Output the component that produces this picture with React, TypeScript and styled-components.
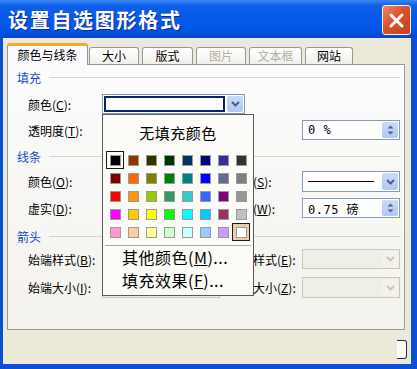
import React from "react";
import styled, { createGlobalStyle } from "styled-components";

const GlobalStyle = createGlobalStyle`
	html, body {
		margin: 0;
		padding: 0;
		background: #ece9d8;
	}
	body {
		font-family: "Noto Sans CJK SC", "Liberation Sans", sans-serif;
	}
`;

const Window = styled.div`
	width: 417px;
	height: 369px;
	display: flex;
	flex-direction: column;
	background: #0b4fd6;
	overflow: hidden;
`;

const TitleBar = styled.div`
	height: 38px;
	flex: none;
	display: flex;
	align-items: center;
	justify-content: space-between;
	padding: 0 6px 0 8px;
	background: linear-gradient(#3a86f5 0%, #0d5fe8 15%, #0055e5 80%, #0846c6 100%);
`;

const Title = styled.span`
	color: #fff;
	font-size: 20px;
	font-weight: 700;
	letter-spacing: 1.7px;
	text-shadow: 1px 1px 0 #0a2a9c;
`;

const CloseButton = styled.div`
	width: 27px;
	height: 28px;
	margin-top: 2px;
	border: 1px solid #f4f0ee;
	border-radius: 3px;
	background: linear-gradient(135deg, #ea8a68 0%, #d9532b 45%, #c4421d 100%);
	display: flex;
	align-items: center;
	justify-content: center;
`;

const Body = styled.div`
	flex: 1;
	margin: 0 6px 5px 3px;
	padding: 5px 6px 0 4px;
	background: #ece9d8;
	display: flex;
	flex-direction: column;
`;

const TabStrip = styled.div`
	display: flex;
	align-items: flex-end;
	height: 21px;
	position: relative;
	z-index: 1;
`;

const Tab = styled.div<{ $w: number; $ml: number; $active?: boolean; $disabled?: boolean }>`
	width: ${(p) => p.$w}px;
	margin-left: ${(p) => p.$ml}px;
	height: ${(p) => (p.$active ? 22 : 17)}px;
	margin-bottom: ${(p) => (p.$active ? -1 : 0)}px;
	box-sizing: border-box;
	border: 1px solid #919b9c;
	border-bottom: none;
	border-radius: 3px 3px 0 0;
	border-top: ${(p) => (p.$active ? "3px solid #f3a63a" : "1px solid #919b9c")};
	background: ${(p) => (p.$active ? "#fcfcfe" : "linear-gradient(#ffffff, #f0f0ea)")};
	color: ${(p) => (p.$disabled ? "#b4b1a4" : "#000")};
	font-size: 12px;
	line-height: ${(p) => (p.$active ? 17 : 15)}px;
	text-align: center;
`;

const Panel = styled.div`
	height: 266px;
	box-sizing: border-box;
	border: 1px solid #919b9c;
	background: linear-gradient(#fcfcfe, #f3f2ec);
	padding: 5px 4px 0 9px;
	display: flex;
	flex-direction: column;
`;

const SectionHeader = styled.div<{ $top: number }>`
	margin-top: ${(p) => p.$top}px;
	height: 14px;
	display: flex;
	align-items: center;
	color: #1c4bc0;
	font-size: 12px;

	&::after {
		content: "";
		flex: 1;
		height: 1px;
		margin-left: 8px;
		background: #d6d5c8;
	}
`;

const Row = styled.div<{ $top: number; $h?: number }>`
	margin-top: ${(p) => p.$top}px;
	height: ${(p) => p.$h ?? 20}px;
	padding-left: 10px;
	display: grid;
	grid-template-columns: 75px 118px 9px 73px 98px;
	align-items: center;
	font-size: 12px;
	color: #000;
`;

const Label = styled.span<{ $col?: number }>`
	grid-column: ${(p) => p.$col ?? 1};
	white-space: nowrap;
	padding-left: ${(p) => (p.$col ? 0 : 1)}px;
`;

const Combo = styled.div<{ $span?: string; $disabled?: boolean }>`
	grid-column: ${(p) => p.$span ?? "auto"};
	height: 20px;
	box-sizing: border-box;
	border: 1px solid ${(p) => (p.$disabled ? "#c9c7ba" : "#7f9db9")};
	background: ${(p) => (p.$disabled ? "#efeee7" : "#fff")};
	display: flex;
	align-items: stretch;
	padding: 1px;
	position: relative;
	font-size: 12px;
`;

const ComboValue = styled.div<{ $selected?: boolean }>`
	flex: 1;
	display: flex;
	align-items: center;
	padding: 0 4px;
	margin-right: 2px;
	box-sizing: border-box;
	border: ${(p) => (p.$selected ? "2px solid #0a246a" : "none")};
	font-family: "DejaVu Sans Mono", "Noto Sans CJK SC", monospace;
	letter-spacing: 0.5px;
`;

const LineSample = styled.div`
	flex: 1;
	height: 1px;
	background: #000;
	margin-right: 2px;
`;

const ArrowButton = styled.div<{ $disabled?: boolean }>`
	width: 16px;
	flex: none;
	border-radius: 2px;
	background: ${(p) => (p.$disabled ? "#f2f1ea" : "linear-gradient(#cbdafc, #b0c6f6)")};
	display: flex;
	flex-direction: column;
	align-items: center;
	justify-content: center;
	gap: 2px;
`;

const Popup = styled.div`
	position: absolute;
	left: -1px;
	top: calc(100% + 1px);
	width: 152px;
	box-sizing: border-box;
	border: 1px solid #5a5a5a;
	background: #fbfbf8;
	z-index: 10;
	padding-bottom: 3px;
	font-family: "Noto Sans CJK SC", sans-serif;
`;

const NoFill = styled.div`
	height: 30px;
	margin-top: 3px;
	line-height: 30px;
	text-align: center;
	font-size: 15px;
	letter-spacing: 0.5px;
`;

const SwatchGrid = styled.div`
	margin: 3px 0 0 3px;
	display: grid;
	grid-template-columns: repeat(8, 18px);
	grid-auto-rows: 18px;
`;

const Cell = styled.div<{ $frame?: "dark" | "tan" }>`
	box-sizing: border-box;
	display: flex;
	align-items: center;
	justify-content: center;
	border: ${(p) => (p.$frame ? "1px solid #1a1a1a" : "none")};
	background: ${(p) => (p.$frame === "tan" ? "#e7cfa6" : "transparent")};
`;

const Swatch = styled.div<{ $c: string }>`
	width: 11px;
	height: 11px;
	box-sizing: border-box;
	border: 1px solid #9a9a9a;
	background: ${(p) => p.$c};
`;

const Separator = styled.div`
	height: 1px;
	margin: 4px 2px 0 2px;
	background: #a8a8a8;
`;

const MenuItem = styled.div`
	height: 23px;
	line-height: 23px;
	padding-left: 19px;
	font-size: 16px;
	letter-spacing: 0.5px;
	white-space: nowrap;
`;

const Footer = styled.div`
	flex: 1;
	display: flex;
	justify-content: flex-end;
	align-items: flex-start;
	margin-right: -2px;
`;

const ButtonEdge = styled.div`
	width: 9px;
	height: 17px;
	margin-top: 10px;
	border: 1px solid #1c2f60;
	border-left: none;
	border-radius: 0 3px 3px 0;
	background: #fafaf7;
`;

const Chevron = ({ color }: { color: string }) => (
	<svg width="9" height="6" viewBox="0 0 9 6">
		<path d="M1 1 L4.5 4.5 L8 1" fill="none" stroke={color} strokeWidth="2" />
	</svg>
);

const SpinArrows = () => (
	<>
		<svg width="7" height="4" viewBox="0 0 7 4">
			<path d="M0.5 3.5 L3.5 0.5 L6.5 3.5 Z" fill="#4d6185" />
		</svg>
		<svg width="7" height="4" viewBox="0 0 7 4">
			<path d="M0.5 0.5 L3.5 3.5 L6.5 0.5 Z" fill="#4d6185" />
		</svg>
	</>
);

const palette = [
	["#000000", "#993300", "#333300", "#003300", "#003366", "#000080", "#333399", "#333333"],
	["#800000", "#ff6600", "#808000", "#008000", "#008080", "#0000ff", "#666699", "#808080"],
	["#ff0000", "#ff9900", "#99cc00", "#339966", "#33cccc", "#3366ff", "#800080", "#969696"],
	["#ff00ff", "#ffcc00", "#ffff00", "#00ff00", "#00ffff", "#00ccff", "#993366", "#c0c0c0"],
	["#ff99cc", "#ffcc99", "#ffff99", "#ccffcc", "#ccffff", "#99ccff", "#cc99ff", "#ffffff"],
];

const tabs = [
	{ name: "大小", w: 50, ml: 1 },
	{ name: "版式", w: 51, ml: 3 },
	{ name: "图片", w: 50, ml: 3, disabled: true },
	{ name: "文本框", w: 53, ml: 3, disabled: true },
	{ name: "网站", w: 48, ml: 3 },
];

const Mn = ({ text, k }: { text: string; k: string }) => (
	<>
		{text}(<u>{k}</u>):
	</>
);

export default function App() {
	return (
		<>
			<GlobalStyle />
			<Window>
				<TitleBar>
					<Title>设置自选图形格式</Title>
					<CloseButton>
						<svg width="15" height="15" viewBox="0 0 15 15">
							<path d="M2 2 L13 13 M13 2 L2 13" stroke="#fff" strokeWidth="3" strokeLinecap="round" />
						</svg>
					</CloseButton>
				</TitleBar>
				<Body>
					<TabStrip>
						<Tab $w={81} $ml={0} $active>
							颜色与线条
						</Tab>
						{tabs.map((t) => (
							<Tab key={t.name} $w={t.w} $ml={t.ml} $disabled={t.disabled}>
								{t.name}
							</Tab>
						))}
					</TabStrip>
					<Panel>
						<SectionHeader $top={0}>填充</SectionHeader>
						<Row $top={10}>
							<Label>
								<Mn text="颜色" k="C" />
							</Label>
							<Combo $span="2 / 4" style={{ width: 143 }}>
								<ComboValue $selected />
								<ArrowButton>
									<Chevron color="#4d6185" />
								</ArrowButton>
								<Popup>
									<NoFill>无填充颜色</NoFill>
									<SwatchGrid>
										{palette.flat().map((c, i) => (
											<Cell key={i} $frame={i === 0 ? "dark" : i === 39 ? "tan" : undefined}>
												<Swatch $c={c} />
											</Cell>
										))}
									</SwatchGrid>
									<Separator />
									<MenuItem>
										其他颜色(<u>M</u>)...
									</MenuItem>
									<MenuItem>
										填充效果(<u>F</u>)...
									</MenuItem>
								</Popup>
							</Combo>
						</Row>
						<Row $top={6}>
							<Label>
								<Mn text="透明度" k="T" />
							</Label>
							<Combo $span="5">
								<ComboValue>0 %</ComboValue>
								<ArrowButton>
									<SpinArrows />
								</ArrowButton>
							</Combo>
						</Row>
						<SectionHeader $top={9}>线条</SectionHeader>
						<Row $top={8} $h={21}>
							<Label>
								<Mn text="颜色" k="O" />
							</Label>
							<Combo $span="2">
								<ComboValue />
								<ArrowButton>
									<Chevron color="#4d6185" />
								</ArrowButton>
							</Combo>
							<Label $col={4}>
								<Mn text="线型" k="S" />
							</Label>
							<Combo $span="5" style={{ height: 21 }}>
								<ComboValue>
									<LineSample />
								</ComboValue>
								<ArrowButton>
									<Chevron color="#4d6185" />
								</ArrowButton>
							</Combo>
						</Row>
						<Row $top={6}>
							<Label>
								<Mn text="虚实" k="D" />
							</Label>
							<Combo $span="2">
								<ComboValue />
								<ArrowButton>
									<Chevron color="#4d6185" />
								</ArrowButton>
							</Combo>
							<Label $col={4}>
								<Mn text="粗细" k="W" />
							</Label>
							<Combo $span="5">
								<ComboValue>0.75 磅</ComboValue>
								<ArrowButton>
									<SpinArrows />
								</ArrowButton>
							</Combo>
						</Row>
						<SectionHeader $top={11}>箭头</SectionHeader>
						<Row $top={6}>
							<Label>
								<Mn text="始端样式" k="B" />
							</Label>
							<Combo $span="2" $disabled>
								<ComboValue />
								<ArrowButton $disabled>
									<Chevron color="#c9c7ba" />
								</ArrowButton>
							</Combo>
							<Label $col={4}>
								<Mn text="末端样式" k="E" />
							</Label>
							<Combo $span="5" $disabled>
								<ComboValue />
								<ArrowButton $disabled>
									<Chevron color="#c9c7ba" />
								</ArrowButton>
							</Combo>
						</Row>
						<Row $top={8} $h={21}>
							<Label>
								<Mn text="始端大小" k="I" />
							</Label>
							<Combo $span="2" $disabled>
								<ComboValue />
								<ArrowButton $disabled>
									<Chevron color="#c9c7ba" />
								</ArrowButton>
							</Combo>
							<Label $col={4}>
								<Mn text="末端大小" k="Z" />
							</Label>
							<Combo $span="5" $disabled style={{ height: 21 }}>
								<ComboValue />
								<ArrowButton $disabled>
									<Chevron color="#c9c7ba" />
								</ArrowButton>
							</Combo>
						</Row>
					</Panel>
					<Footer>
						<ButtonEdge />
					</Footer>
				</Body>
			</Window>
		</>
	);
}
